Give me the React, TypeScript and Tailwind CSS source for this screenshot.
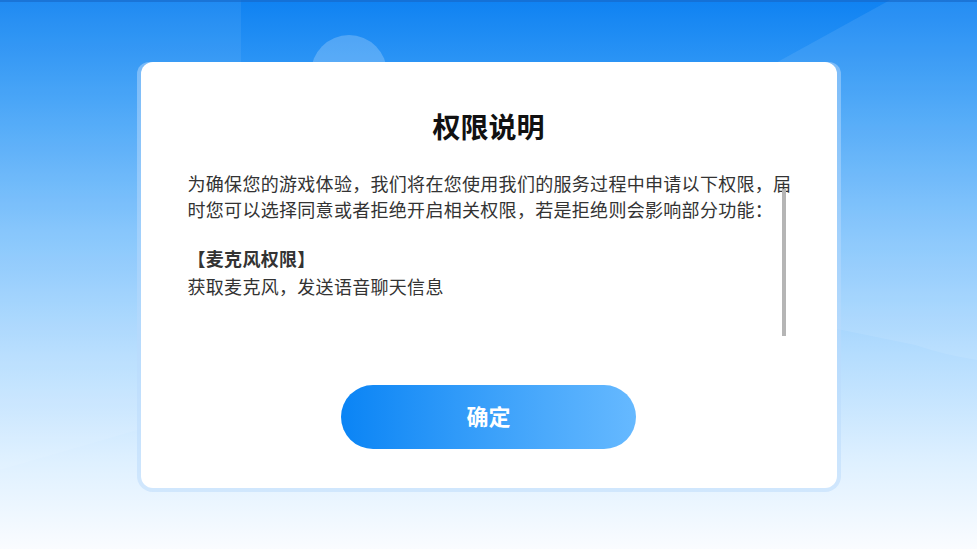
import React from "react";

const font = { fontFamily: '"Noto Sans CJK SC", "Noto Sans", sans-serif' };

function Backdrop() {
  // decorative shapes behind the dialog
  return (
    <svg
      className="absolute inset-0 h-full w-full"
      viewBox="0 0 977 549"
      preserveAspectRatio="none"
    >
      <polygon points="0,0 241,0 241,400 0,470" fill="#ffffff" fillOpacity="0.07" />
      <circle cx="349" cy="73" r="38" fill="#ffffff" fillOpacity="0.22" />
      <path
        d="M890 0 L600 160 L600 280 L915 345 Q945 355 977 360 L977 0 Z"
        fill="#ffffff"
        fillOpacity="0.09"
      />
      <rect x="0" y="0" width="977" height="2" fill="#1766c4" fillOpacity="0.6" />
    </svg>
  );
}

function PermissionDialog() {
  return (
    <div className="rounded-b-[16px] rounded-t-[12px] bg-[#b9dafb]/50 px-[4px] pb-[4px]">
      <div className="flex h-[426px] w-[696px] flex-col items-center rounded-[12px] bg-white pt-[46px] pb-[38px]">
        <h1 className="h-[36px] text-[28px] leading-[36px] font-bold text-[#111]">
          权限说明
        </h1>

        <div className="relative mt-[26px] ml-[47px] h-[170px] w-[612px] self-start text-[18px] tracking-[0.3px] text-[#333]">
          <p className="leading-[26px]">
            为确保您的游戏体验，我们将在您使用我们的服务过程中申请以下权限，届时您可以选择同意或者拒绝开启相关权限，若是拒绝则会影响部分功能：
          </p>
          <p className="mt-[21px] leading-[30px] font-bold">【麦克风权限】</p>
          <p className="leading-[26px]">获取麦克风，发送语音聊天信息</p>
          <div className="absolute top-[19px] left-[594px] h-[147px] w-[4px] bg-[#b5b5b5]" />
        </div>

        <button className="mt-[45px] h-[64px] w-[295px] rounded-full bg-[linear-gradient(90deg,#0a84f5_0%,#3aa0fa_50%,#66b9ff_100%)] pb-[3px] text-[22px] font-bold text-white">
          确定
        </button>
      </div>
    </div>
  );
}

export default function App() {
  return (
    <div
      style={font}
      className="relative flex h-[549px] w-full justify-center overflow-hidden bg-[linear-gradient(180deg,#0f82f2_0%,#3c9ff7_18%,#7ec2fc_42%,#b3dcfe_64%,#def0ff_84%,#fafcff_100%)] pt-[62px]"
    >
      <Backdrop />
      <div className="relative">
        <PermissionDialog />
      </div>
    </div>
  );
}
